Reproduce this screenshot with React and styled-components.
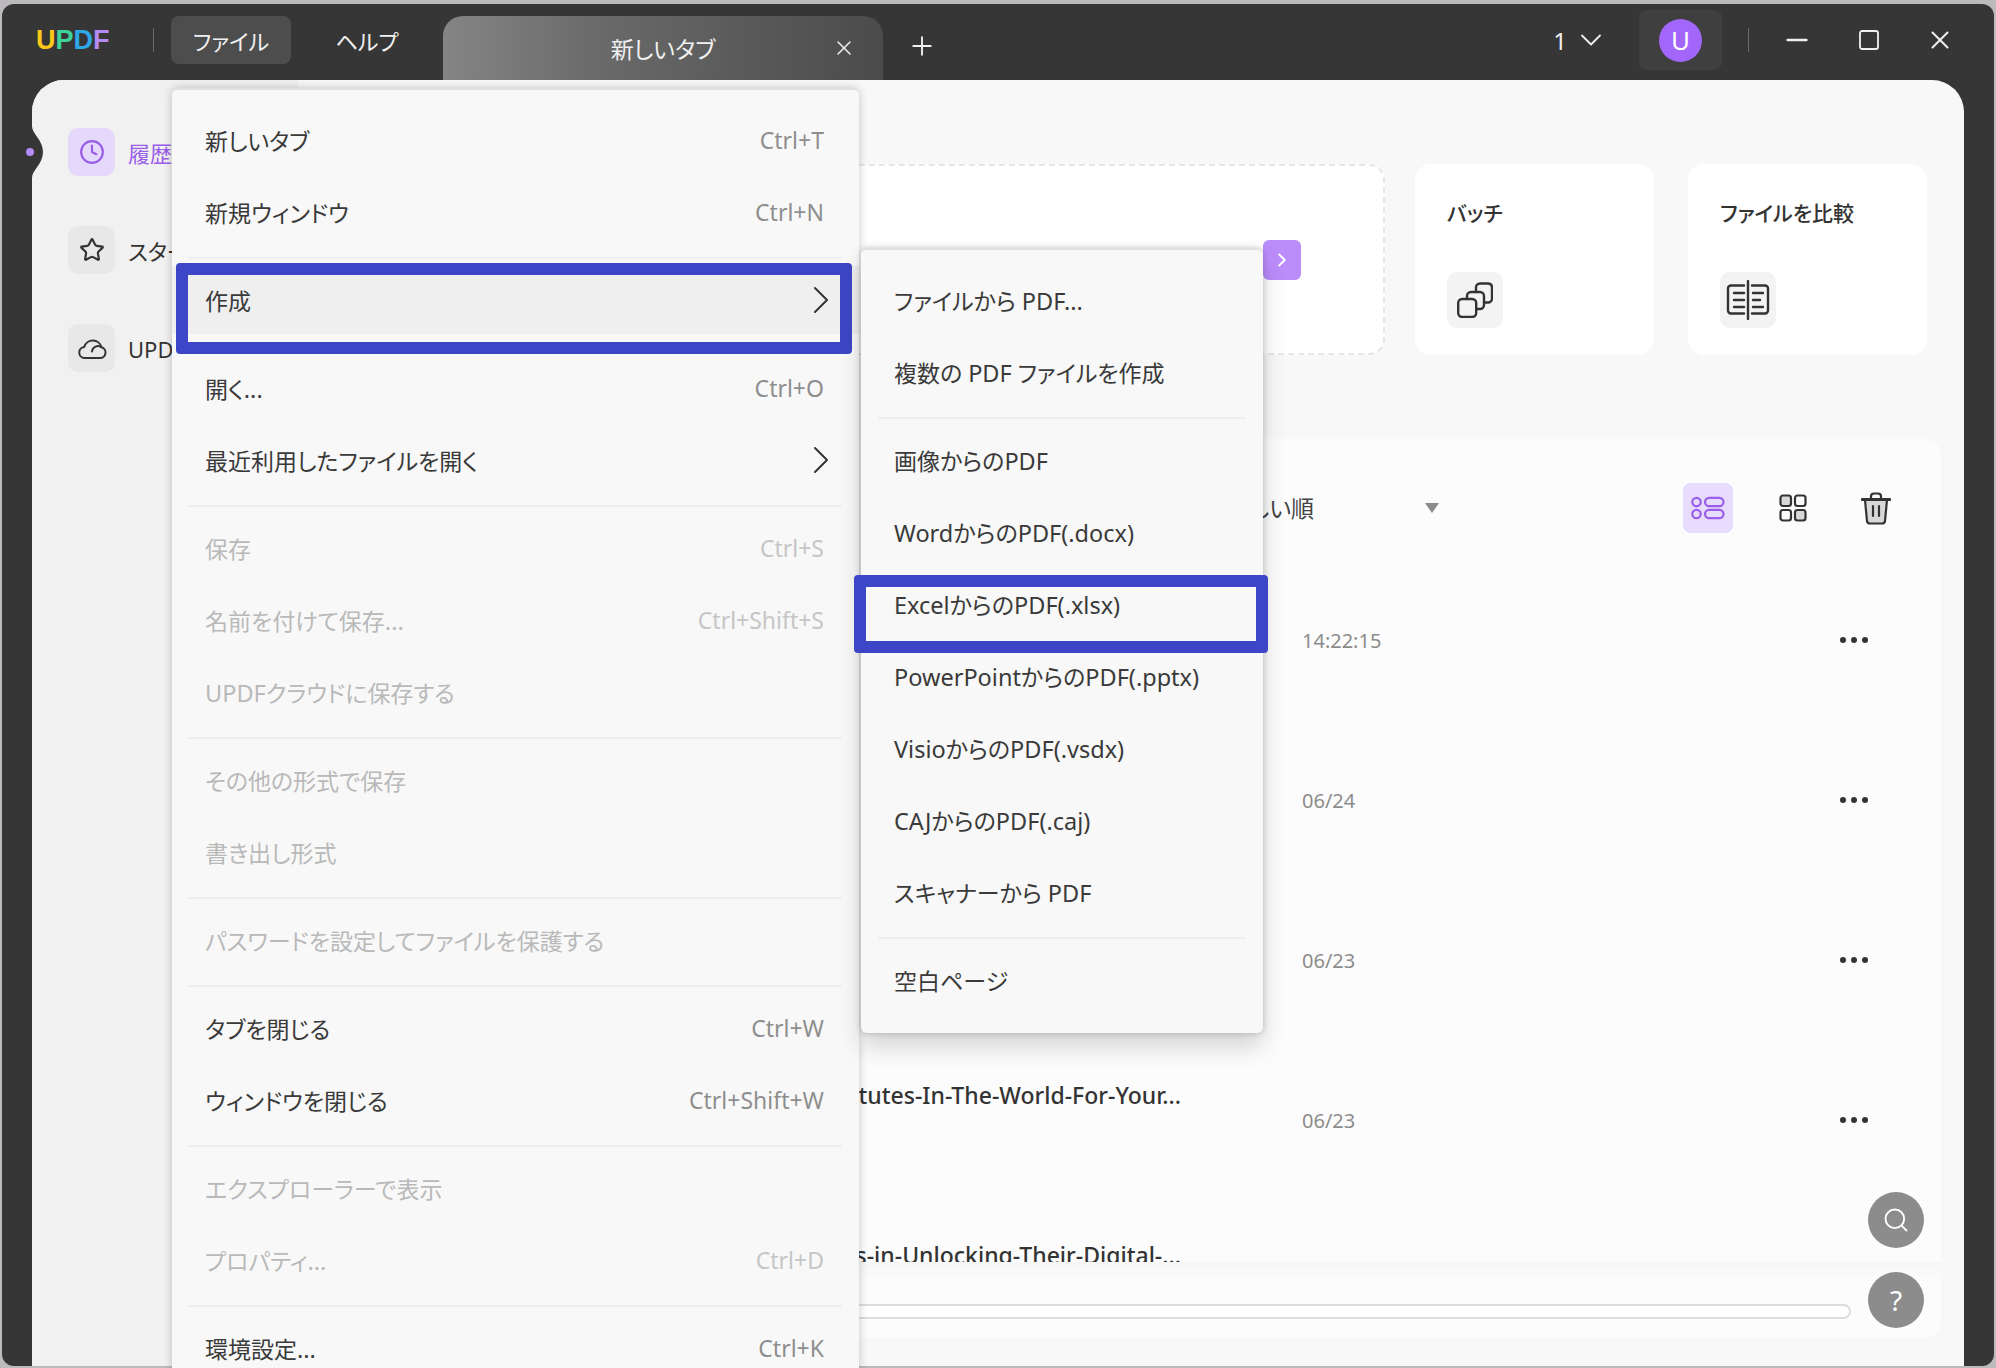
import React from 'react';
import styled, { createGlobalStyle } from 'styled-components';
import { Clock, Star, Search, X, Plus, ChevronDown, ChevronRight, Minus, Square } from 'lucide-react';

const FONT = '"Noto Sans", "Noto Sans CJK JP", sans-serif';

const fileMenu = [
  { label: '新しいタブ', keys: 'Ctrl+T' },
  { label: '新規ウィンドウ', keys: 'Ctrl+N' },
  { sep: true },
  { label: '作成', arrow: true, active: true, marked: true },
  { sep: true },
  { label: '開く...', keys: 'Ctrl+O' },
  { label: '最近利用したファイルを開く', arrow: true },
  { sep: true },
  { label: '保存', keys: 'Ctrl+S', off: true },
  { label: '名前を付けて保存...', keys: 'Ctrl+Shift+S', off: true },
  { label: 'UPDFクラウドに保存する', off: true },
  { sep: true },
  { label: 'その他の形式で保存', off: true },
  { label: '書き出し形式', off: true },
  { sep: true },
  { label: 'パスワードを設定してファイルを保護する', off: true },
  { sep: true },
  { label: 'タブを閉じる', keys: 'Ctrl+W' },
  { label: 'ウィンドウを閉じる', keys: 'Ctrl+Shift+W' },
  { sep: true },
  { label: 'エクスプローラーで表示', off: true },
  { label: 'プロパティ...', keys: 'Ctrl+D', off: true },
  { sep: true },
  { label: '環境設定...', keys: 'Ctrl+K' },
];

const createMenu = [
  { label: 'ファイルから PDF...' },
  { label: '複数の PDF ファイルを作成' },
  { sep: true },
  { label: '画像からのPDF' },
  { label: 'WordからのPDF(.docx)' },
  { label: 'ExcelからのPDF(.xlsx)', marked: true },
  { label: 'PowerPointからのPDF(.pptx)' },
  { label: 'VisioからのPDF(.vsdx)' },
  { label: 'CAJからのPDF(.caj)' },
  { label: 'スキャナーから PDF' },
  { sep: true },
  { label: '空白ページ' },
];

const files = [
  { name: 'Annual-Report.pdf', date: '14:22:15' },
  { name: 'Invoice-2023.pdf', date: '06/24' },
  { name: 'Meeting-Notes.pdf', date: '06/23' },
  { name: 'Top-10-Best-Institutes-In-The-World-For-Your...', date: '06/23' },
  { name: 'How-Students-Find-Success-in-Unlocking-Their-Digital-...', date: '06/22' },
];

const GlobalStyle = createGlobalStyle`
  html, body {
    margin: 0;
    padding: 0;
    background: #bdbabd;
  }
  * {
    box-sizing: border-box;
  }
`;

const Page = styled.div`
  width: 1996px;
  height: 1368px;
  padding: 4px 2px 2px;
  overflow: hidden;
  font-family: ${FONT};
  font-feature-settings: "palt";
`;

const Win = styled.div`
  height: 1362px;
  display: flex;
  flex-direction: column;
  background: #363636;
  border-radius: 12px;
`;

const TitleBar = styled.div`
  flex: 0 0 76px;
  display: flex;
  align-items: center;
  padding: 0 39px 4px 34px;
  color: #f0f0f0;
`;

const Logo = styled.div`
  width: 74px;
  font-family: "Liberation Sans", sans-serif;
  font-size: 27px;
  font-weight: 700;
  line-height: 20px;
  white-space: nowrap;
`;

const LogoLetter = styled.span`
  color: ${(p) => p.$color};
`;

const BarRule = styled.div`
  width: 1px;
  height: 24px;
  background: #6a6a6a;
  margin: ${(p) => p.$margin};
`;

const BarMenu = styled.div`
  width: ${(p) => p.$width}px;
  height: 48px;
  margin-right: 22px;
  display: flex;
  align-items: center;
  justify-content: center;
  font-size: 22px;
  border-radius: 8px;
  background: ${(p) => (p.$on ? '#4d4d4d' : 'transparent')};
`;

const Tab = styled.div`
  align-self: flex-end;
  margin-bottom: -4px;
  width: 440px;
  height: 64px;
  display: grid;
  grid-template-columns: 1fr auto 1fr;
  align-items: center;
  font-size: 23px;
  border-radius: 20px 20px 0 0;
  background: linear-gradient(90deg, #858585 0%, #6a6a6a 35%, #4b4b4b 100%);
`;

const TabLabel = styled.div`
  grid-column: 2;
`;

const TabClose = styled.div`
  grid-column: 3;
  justify-self: end;
  margin-right: 27px;
  display: flex;
`;

const AddTab = styled.div`
  margin: 12px 0 0 24px;
  display: flex;
`;

const Spacer = styled.div`
  flex: 1;
`;

const PageCount = styled.div`
  display: flex;
  align-items: center;
  gap: 6px;
  font-size: 24px;
  margin-right: 30px;
`;

const UserBox = styled.div`
  width: 83px;
  height: 60px;
  display: flex;
  align-items: center;
  justify-content: center;
  border-radius: 8px;
  background: #3f3f3f;
`;

const Avatar = styled.div`
  width: 43px;
  height: 43px;
  display: flex;
  align-items: center;
  justify-content: center;
  border-radius: 50%;
  background: #a266fb;
  color: #fff;
  font-size: 26px;
`;

const WinButton = styled.div`
  display: flex;
  margin-left: ${(p) => p.$left}px;
`;

const Content = styled.div`
  position: relative;
  flex: 1;
  min-height: 0;
  margin: 0 30px;
  display: flex;
  background: #f8f8f8;
  border-radius: 32px 32px 0 0;
`;

const Sidebar = styled.div`
  position: relative;
  flex: 0 0 266px;
  display: flex;
  flex-direction: column;
  gap: 50px;
  padding: 48px 0 0 36px;
  background: #f1f1f1;
  border-radius: 32px 0 0 0;
`;

const Notch = styled.svg`
  position: absolute;
  left: -8px;
  top: 46px;
`;

const SideItem = styled.div`
  display: flex;
  align-items: center;
  gap: 13px;
  font-size: 22px;
  white-space: nowrap;
  color: ${(p) => (p.$on ? '#9a5ee8' : '#333')};
`;

const SideIcon = styled.div`
  width: 47px;
  height: 48px;
  display: flex;
  align-items: center;
  justify-content: center;
  border-radius: 10px;
  background: ${(p) => (p.$on ? '#e5d9fb' : '#e8e8e8')};
`;

const Main = styled.div`
  position: relative;
  flex: 1;
  min-width: 0;
  min-height: 0;
  display: flex;
  flex-direction: column;
  padding: 84px 23px 28px 24px;
`;

const Hero = styled.div`
  display: flex;
  gap: 30px;
  height: 191px;
  margin-right: 14px;
`;

const DropCard = styled.div`
  position: relative;
  flex: 1;
  background: #fff;
  border: 2px dashed #e6e6e6;
  border-radius: 16px;
`;

const DropArrow = styled.div`
  position: absolute;
  right: 82px;
  top: 74px;
  width: 38px;
  height: 40px;
  display: flex;
  align-items: center;
  justify-content: center;
  border-radius: 6px;
  background: #bb8dfb;
`;

const Tools = styled.div`
  display: flex;
  gap: 34px;
`;

const ToolCard = styled.div`
  width: ${(p) => p.$width}px;
  padding: 32px 32px 27px;
  display: flex;
  flex-direction: column;
  justify-content: space-between;
  background: #fff;
  border-radius: 16px;
`;

const ToolTitle = styled.div`
  font-size: 21px;
  font-weight: 500;
  line-height: 32px;
  padding-top: 1px;
  color: #333;
`;

const ToolIcon = styled.div`
  width: 56px;
  height: 56px;
  display: flex;
  align-items: center;
  justify-content: center;
  border-radius: 10px;
  background: #f3f3f3;
`;

const Panel = styled.div`
  flex: 1;
  min-height: 0;
  margin-top: 84px;
  display: flex;
  flex-direction: column;
  border-radius: 16px;
  background: #fcfcfc;
`;

const Toolbar = styled.div`
  flex: 0 0 121px;
  display: flex;
  align-items: flex-start;
  padding: 44px 40px 0 0;
`;

const SortLabel = styled.div`
  width: 992px;
  height: 50px;
  line-height: 50px;
  text-align: right;
  font-size: 23px;
  color: #444;
  white-space: nowrap;
`;

const SortCaret = styled.div`
  width: 0;
  height: 0;
  margin: 20px 0 0 111px;
  border-left: 7px solid transparent;
  border-right: 7px solid transparent;
  border-top: 10px solid #8a8a8a;
`;

const ViewButton = styled.div`
  width: 50px;
  height: 50px;
  display: flex;
  align-items: center;
  justify-content: center;
  margin-left: ${(p) => p.$left || 0}px;
  border-radius: 8px;
  background: ${(p) => (p.$on ? '#e7dbfe' : 'transparent')};
`;

const FileList = styled.div`
  flex: 1;
  min-height: 0;
  overflow: hidden;
`;

const FileRow = styled.div`
  height: 160px;
  display: flex;
  align-items: center;
  padding-right: 70px;
`;

const FileName = styled.div`
  width: 859px;
  margin-bottom: 50px;
  overflow: hidden;
  text-align: right;
  white-space: nowrap;
  font-size: 23px;
  font-weight: 500;
  color: #333;
`;

const FileDate = styled.div`
  margin-left: 121px;
  font-size: 20px;
  color: #8c8c8c;
`;

const FileMore = styled.div`
  margin-left: auto;
  width: 34px;
  display: flex;
  justify-content: space-between;
  padding: 0 3px;
`;

const MoreDot = styled.span`
  width: 6px;
  height: 6px;
  border-radius: 50%;
  background: #333;
`;

const ScrollArea = styled.div`
  flex: 0 0 76px;
  padding: 42px 90px 0 8px;
  background: linear-gradient(#f6f6f6, #fcfcfc 18px);
  border-radius: 0 0 16px 16px;
`;

const ScrollTrack = styled.div`
  height: 15px;
  background: #fff;
  border: 2px solid #dcdcdc;
  border-radius: 8px;
`;

const FloatStack = styled.div`
  position: absolute;
  right: 40px;
  bottom: 38px;
  display: flex;
  flex-direction: column;
  gap: 24px;
`;

const FloatButton = styled.div`
  width: 56px;
  height: 56px;
  display: flex;
  align-items: center;
  justify-content: center;
  border-radius: 50%;
  background: #8c8c8c;
  color: #fff;
  font-size: 28px;
`;

const Menu = styled.div`
  position: absolute;
  left: 140px;
  top: 8px;
  width: 687px;
  padding-top: 16px;
  background: #f8f8f8;
  border: 1px solid #e2e2e2;
  border-width: 2px 0 0;
  border-radius: 6px 6px 0 0;
  box-shadow: 0 0 10px rgba(0, 0, 0, 0.22);
`;

const SubMenu = styled(Menu)`
  left: 829px;
  top: 168px;
  width: 402px;
  padding: 16px 0 15px;
  border-radius: 6px;
  box-shadow: 0 0 6px rgba(0, 0, 0, 0.2), 0 14px 24px rgba(0, 0, 0, 0.16);
`;

const Row = styled.div`
  position: relative;
  height: 72px;
  padding: 0 35px 4px 33px;
  display: flex;
  align-items: center;
  justify-content: space-between;
  font-size: 23px;
  white-space: nowrap;
  color: ${(p) => (p.$off ? '#b9b9b9' : '#3a3a3a')};
  background: ${(p) =>
    p.$active ? 'linear-gradient(#efefef, #efefef) no-repeat top / 100% 68px' : 'none'};
`;

const LatinPart = styled.span`
  font-size: 23.5px;
`;

const Keys = styled.span`
  font-size: 23px;
  color: ${(p) => (p.$off ? '#c6c6c6' : '#8e8e8e')};
`;

const Rule = styled.div`
  height: 16px;
  margin: 0 17px;
  display: flex;
  align-items: center;

  &::after {
    content: '';
    width: 100%;
    height: 2px;
    background: #eeeeee;
  }
`;

const Mark = styled.div`
  position: absolute;
  left: ${(p) => p.$box[0]}px;
  right: ${(p) => p.$box[1]}px;
  top: ${(p) => p.$box[2]}px;
  bottom: ${(p) => p.$box[3]}px;
  border: 12px solid #3d46c6;
  border-radius: 4px;
`;

const RowArrow = styled.div`
  margin-right: -21px;
  display: flex;
`;

const CloudIcon = () => (
  <svg width="30" height="26" viewBox="0 0 30 26" fill="none" stroke="#333" strokeWidth="2" strokeLinecap="round" strokeLinejoin="round">
    <path d="M7 23h16a5.500 5.500 0 0 0 1.500-10.800A9 9 0 0 0 7.200 11.900 5.600 5.600 0 0 0 7 23z" />
    <path d="M15 16.500a6 6 0 0 1 9.500-4.300" />
  </svg>
);

const BatchIcon = () => (
  <svg width="36" height="36" viewBox="0 0 36 36" fill="none" stroke="#333" strokeWidth="2.4" strokeLinecap="round">
    <rect x="1.200" y="17" width="18" height="18" rx="4" />
    <path d="M10 17v-3a4 4 0 0 1 4-4h9a4 4 0 0 1 4 4v9a4 4 0 0 1-4 4h-3.500" />
    <path d="M19 10V5.500a4 4 0 0 1 4-4h8.500a4 4 0 0 1 3.500 4v11a4 4 0 0 1-4 4H27" />
  </svg>
);

const CompareIcon = () => (
  <svg width="44" height="40" viewBox="0 0 44 40" fill="none" stroke="#333" strokeWidth="2.4" strokeLinecap="round">
    <path d="M22 1v38" />
    <path d="M18 5.500H5a3 3 0 0 0-3 3v22a3 3 0 0 0 3 3h13" />
    <path d="M26 5.500h13a3 3 0 0 1 3 3v22a3 3 0 0 1-3 3H26" />
    <path d="M8 13h10M8 20h10M8 27h10M27 13h10M27 20h7M27 27h10" />
  </svg>
);

const ListViewIcon = () => (
  <svg width="34" height="24" viewBox="0 0 34 24" fill="none" stroke="#9a5ee8" strokeWidth="2.2">
    <circle cx="5.500" cy="6" r="4.200" />
    <circle cx="5.500" cy="18" r="4.200" />
    <rect x="14" y="1.800" width="18.500" height="8.400" rx="4.200" />
    <rect x="14" y="13.800" width="18.500" height="8.400" rx="4.200" />
  </svg>
);

const GridViewIcon = () => (
  <svg width="28" height="28" viewBox="0 0 28 28" stroke="#333" strokeWidth="2.2">
    <rect x="1.500" y="1.500" width="10.500" height="10.500" rx="2.500" fill="#d8d8d8" />
    <rect x="16" y="1.500" width="10.500" height="10.500" rx="2.500" fill="none" />
    <rect x="1.500" y="16" width="10.500" height="10.500" rx="2.500" fill="none" />
    <rect x="16" y="16" width="10.500" height="10.500" rx="2.500" fill="#d8d8d8" />
  </svg>
);

const TrashIcon = () => (
  <svg width="30" height="33" viewBox="0 0 30 33" fill="none" stroke="#333" strokeWidth="2.2" strokeLinecap="round" strokeLinejoin="round">
    <path d="M4 8l2 21a3 3 0 0 0 3 2.500h12a3 3 0 0 0 3-2.500l2-21z" fill="#d8d8d8" />
    <path d="M1 7.500h28" strokeWidth="2.800" />
    <path d="M10 7V4.500a3 3 0 0 1 3-3h4a3 3 0 0 1 3 3V7" />
    <path d="M12 14v10M18 14v10" />
  </svg>
);

// latin runs sit a little larger than the kana next to them in the menus
const MixedText = ({ text }) => (
  <span>
    {text.split(/([A-Za-z0-9.()]+)/).map((part, i) =>
      i % 2 ? <LatinPart key={i}>{part}</LatinPart> : part
    )}
  </span>
);

const MenuRows = ({ items }) =>
  items.map((item, i) =>
    item.sep ? (
      <Rule key={i} />
    ) : (
      <Row key={i} $off={item.off} $active={item.active}>
        <MixedText text={item.label} />
        {item.keys && <Keys $off={item.off}>{item.keys}</Keys>}
        {item.arrow && (
          <RowArrow>
            <ChevronRight size={48} strokeWidth={1} color="#333" />
          </RowArrow>
        )}
        {item.marked && <Mark $box={item.active ? [4, 7, -3, -16] : [-7, -5, 5, -11]} />}
      </Row>
    )
  );

export default function App() {
  return (
    <>
      <GlobalStyle />
      <Page>
        <Win>
          <TitleBar>
            <Logo>
              <LogoLetter $color="#ffc91a">U</LogoLetter>
              <LogoLetter $color="#3ed39a">P</LogoLetter>
              <LogoLetter $color="#2fa8e8">D</LogoLetter>
              <LogoLetter $color="#b48cf5">F</LogoLetter>
            </Logo>
            <BarRule $margin="0 17px 0 43px" />
            <BarMenu $on $width={120}>ファイル</BarMenu>
            <BarMenu $width={108}>ヘルプ</BarMenu>
            <Tab>
              <TabLabel>新しいタブ</TabLabel>
              <TabClose>
                <X size={24} strokeWidth={1.5} />
              </TabClose>
            </Tab>
            <AddTab>
              <Plus size={30} strokeWidth={1.5} />
            </AddTab>
            <Spacer />
            <PageCount>
              <span>1</span>
              <ChevronDown size={36} strokeWidth={1.2} />
            </PageCount>
            <UserBox>
              <Avatar>U</Avatar>
            </UserBox>
            <BarRule $margin="0 0 0 26px" />
            <WinButton $left={32}>
              <Minus size={32} strokeWidth={2} />
            </WinButton>
            <WinButton $left={44}>
              <Square size={24} strokeWidth={1.8} />
            </WinButton>
            <WinButton $left={44}>
              <X size={30} strokeWidth={1.6} />
            </WinButton>
          </TitleBar>
          <Content>
            <Sidebar>
              <Notch width="20" height="52" viewBox="0 0 20 52">
                <path d="M0 0h8c0 8 11 14 11 26S8 44 8 52H0z" fill="#363636" />
                <circle cx="6" cy="26" r="4" fill="#b48cf5" />
              </Notch>
              <SideItem $on>
                <SideIcon $on>
                  <Clock size={26} color="#9a5ee8" strokeWidth={2} />
                </SideIcon>
                履歴
              </SideItem>
              <SideItem>
                <SideIcon>
                  <Star size={26} color="#333" strokeWidth={2} />
                </SideIcon>
                スター付き
              </SideItem>
              <SideItem>
                <SideIcon>
                  <CloudIcon />
                </SideIcon>
                UPDFクラウド
              </SideItem>
            </Sidebar>
            <Main>
              <Hero>
                <DropCard>
                  <DropArrow>
                    <ChevronRight size={22} color="#fff" strokeWidth={2} />
                  </DropArrow>
                </DropCard>
                <Tools>
                  <ToolCard $width={239}>
                    <ToolTitle>バッチ</ToolTitle>
                    <ToolIcon>
                      <BatchIcon />
                    </ToolIcon>
                  </ToolCard>
                  <ToolCard $width={239}>
                    <ToolTitle>ファイルを比較</ToolTitle>
                    <ToolIcon>
                      <CompareIcon />
                    </ToolIcon>
                  </ToolCard>
                </Tools>
              </Hero>
              <Panel>
                <Toolbar>
                  <SortLabel>更新日が新しい順</SortLabel>
                  <SortCaret />
                  <Spacer />
                  <ViewButton $on>
                    <ListViewIcon />
                  </ViewButton>
                  <ViewButton $left={35}>
                    <GridViewIcon />
                  </ViewButton>
                  <ViewButton $left={33}>
                    <TrashIcon />
                  </ViewButton>
                </Toolbar>
                <FileList>
                  {files.map((file) => (
                    <FileRow key={file.name}>
                      <FileName>{file.name}</FileName>
                      <FileDate>{file.date}</FileDate>
                      <FileMore>
                        <MoreDot />
                        <MoreDot />
                        <MoreDot />
                      </FileMore>
                    </FileRow>
                  ))}
                </FileList>
                <ScrollArea>
                  <ScrollTrack />
                </ScrollArea>
              </Panel>
              <FloatStack>
                <FloatButton>
                  <Search size={28} strokeWidth={1.6} />
                </FloatButton>
                <FloatButton>?</FloatButton>
              </FloatStack>
            </Main>
            <Menu>
              <MenuRows items={fileMenu} />
            </Menu>
            <SubMenu>
              <MenuRows items={createMenu} />
            </SubMenu>
          </Content>
        </Win>
      </Page>
    </>
  );
}
